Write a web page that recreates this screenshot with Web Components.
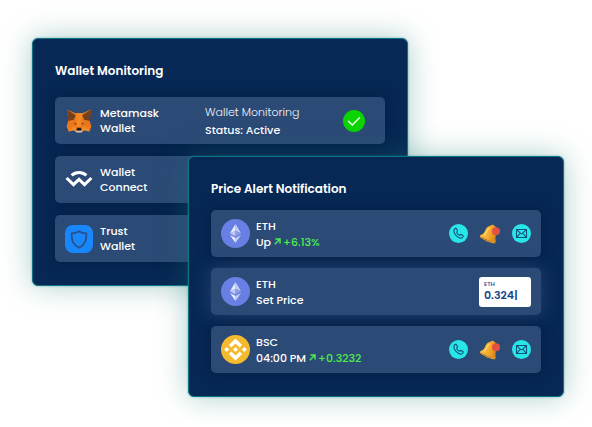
<!DOCTYPE html>
<html lang="en">
<head>
<meta charset="utf-8">
<meta name="viewport" content="width=device-width, initial-scale=1">
<title>Wallet Monitoring</title>
<style>
  body { margin: 0; background: #fff; color: #fff; font: 500 11px/15px Poppins, Inter, sans-serif; }
</style>
</head>
<body>
<card-stage>
  <glow-card heading="Wallet Monitoring">
    <wallet-row>
      <coin-icon slot="icon" name="metamask"></coin-icon>
      <span>Metamask<br>Wallet</span>
      <wallet-status slot="status"></wallet-status>
    </wallet-row>
    <wallet-row>
      <coin-icon slot="icon" name="connect"></coin-icon>
      <span>Wallet<br>Connect</span>
    </wallet-row>
    <wallet-row>
      <coin-icon slot="icon" name="trust"></coin-icon>
      <span>Trust<br>Wallet</span>
    </wallet-row>
  </glow-card>
  <glow-card class="front" heading="Price Alert Notification">
    <alert-row symbol="ETH" detail="Up" change="+6.13%">
      <coin-icon slot="icon" name="eth"></coin-icon>
      <alert-actions slot="end"></alert-actions>
    </alert-row>
    <alert-row class="lit" symbol="ETH" detail="Set Price">
      <coin-icon slot="icon" name="eth"></coin-icon>
      <price-field slot="end"></price-field>
    </alert-row>
    <alert-row symbol="BSC" detail="04:00 PM" change="+0.3232">
      <coin-icon slot="icon" name="bsc"></coin-icon>
      <alert-actions slot="end"></alert-actions>
    </alert-row>
  </glow-card>
</card-stage>

<script>
const define = (name, render) => customElements.define(name, class extends HTMLElement {
  connectedCallback() {
    if (this.shadowRoot) return;
    this.attachShadow({ mode: 'open' }).innerHTML = render(this);
  }
});

define('card-stage', () => `
  <style>
    :host { display: grid; grid-template-columns: 156px minmax(0, 1fr) 156px; align-items: start; padding: 38px 28px 28px 32px; }
    ::slotted(glow-card) { grid-row: 1; grid-column: 1 / 3; }
    ::slotted(.front) { grid-column: 2 / 4; margin-top: 118px; --head-gap: 12px; --row-gap: 11px; z-index: 1; }
  </style>
  <slot></slot>`);

define('glow-card', el => `
  <style>
    :host { display: block; box-sizing: border-box; padding: 23px 22px; border: 1px solid #0f7482; border-radius: 6px;
      background: #072854; box-shadow: 0 0 2px rgba(30,150,160,.7), 0 0 30px rgba(22,118,112,.36); }
    h2 { margin: 0 0 var(--head-gap, 17px); font-size: 12px; line-height: 18px; font-weight: 600; }
    .rows { display: grid; gap: var(--row-gap, 12px); }
  </style>
  <h2>${el.getAttribute('heading')}</h2>
  <div class="rows"><slot></slot></div>`);

const rowBox = `display: flex; align-items: center; box-sizing: border-box; min-height: 47px; border-radius: 5px;
  background: #2c4a76; box-shadow: 0 0 12px rgba(4,20,52,.55);`;

define('wallet-row', () => `
  <style>
    :host { ${rowBox} padding: 0 20px 0 10px; }
    .name { margin-left: 7px; width: 105px; flex: none; }
    .status { flex: 1; min-width: 0; }
  </style>
  <slot name="icon"></slot>
  <div class="name"><slot></slot></div>
  <div class="status"><slot name="status"></slot></div>`);

define('wallet-status', () => `
  <style>
    :host { display: flex; align-items: center; justify-content: space-between; line-height: 18px; }
    p { margin: 0; white-space: nowrap; }
    .what { font-weight: 300; color: #f2f5fa; }
    svg { display: block; flex: none; }
  </style>
  <div><p class="what">Wallet Monitoring</p><p>Status: Active</p></div>
  <svg width="22" height="22" viewBox="0 0 22 22" role="img" aria-label="Active">
    <circle cx="11" cy="11" r="11" fill="#0bd400"/>
    <path d="M5.5 11.2l3.8 3.9 7.2-7.4" fill="none" stroke="#e9ffe8" stroke-width="1.5" stroke-linecap="round" stroke-linejoin="round"/>
  </svg>`);

define('alert-row', el => {
  const change = el.getAttribute('change');
  return `
  <style>
    :host { ${rowBox} padding: 0 10px; line-height: 16px; }
    :host(.lit) { box-shadow: 0 0 18px rgba(72,92,150,.5); }
    .text { flex: 1; margin-left: 6px; white-space: nowrap; }
    p { margin: 0; display: flex; align-items: center; gap: 3px; }
    .up { display: inline-flex; align-items: center; gap: 2px; color: #4bef4b; }
  </style>
  <slot name="icon"></slot>
  <div class="text">
    <p>${el.getAttribute('symbol')}</p>
    <p>${el.getAttribute('detail')}${change ? `
      <span class="up"><svg width="7" height="7" viewBox="0 0 7 7" aria-hidden="true"><path d="M.8 6.200l4.900-4.900M1.400 1h4.600v4.600" fill="none" stroke="currentColor" stroke-width="1.500"/></svg>${change}</span>` : ''}</p>
  </div>
  <slot name="end"></slot>`;
});

define('alert-actions', () => `
  <style>
    :host { display: flex; align-items: center; gap: 10px; }
    button { display: block; padding: 0; border: 0; background: none; cursor: pointer; }
    svg { display: block; }
  </style>
  <button aria-label="Call"><svg width="19" height="19" viewBox="0 0 19 19">
    <circle cx="9.5" cy="9.5" r="9.5" fill="#28e6e8"/>
    <path d="M5.300 5.300c.9-1.100 1.900-1.200 2.300-.3l.8 1.600c.3.700-.9 1.100-.7 1.800.4 1.300 1.400 2.300 2.600 2.700.8.2 1.100-1 1.900-.7l1.500.8c.9.500.7 1.500-.4 2.400-1.300 1-4 .1-6-1.900-2.100-2.100-3.100-5.100-2-6.400z" fill="none" stroke="#12507c" stroke-width="1.100" stroke-linejoin="round"/>
  </svg></button>
  <button aria-label="Notify"><svg width="24" height="20" viewBox="0 0 24 20">
    <defs><linearGradient id="b" x1="0" y1="0" x2="1" y2=".3"><stop offset="0" stop-color="#ffc44c"/><stop offset=".6" stop-color="#f8ae2c"/><stop offset="1" stop-color="#d98a1f"/></linearGradient></defs>
    <path d="M7.400 15.300c-.2 2 2.600 3.600 4.200 2.200z" fill="#b86d18"/>
    <path d="M12.500 1.800c1-1.500 2.700-1.300 3.600-.4 2.500 1.300 3 4 2.400 6.700-.6 2.800-1.600 5.900-.7 10.200l-1.400.9L1.800 12.600l.5-1.300c3.300-1.200 4.300-3.200 5.200-5.500 1-2.300 2.600-3.700 5-4z" fill="url(#b)"/>
    <path d="M1.900 12.600c3.900 3.100 9.500 5.700 14.500 6.400" fill="none" stroke="#e39a28" stroke-width="1"/>
    <path d="M11.600 4.300c-2.600 1-2.600 4.300-5.100 6.900" fill="none" stroke="#ffd676" stroke-width="1.200" stroke-linecap="round"/>
    <circle cx="18" cy="7.200" r="4" fill="#e4503f"/>
  </svg></button>
  <button aria-label="Email"><svg width="19" height="19" viewBox="0 0 19 19">
    <circle cx="9.500" cy="9.500" r="9.500" fill="#28e6e8"/>
    <path d="M4.500 5.500h10v8h-10zM4.700 5.700l3.900 3.700q.9.800 1.800 0L14.300 5.700M4.700 13.300L8 9.500M14.300 13.300L11 9.500" fill="none" stroke="#12507c" stroke-width="1.100" stroke-linejoin="round"/>
  </svg></button>`);

define('price-field', () => `
  <style>
    :host { display: block; box-sizing: border-box; width: 52px; padding: 3px 5px 4px; border-radius: 3px; background: #fff; color: #174489; }
    label { display: block; font-size: 6px; line-height: 8px; }
    input { display: block; box-sizing: border-box; width: 100%; height: 15px; margin: 0; padding: 0; border: 0; background: none; color: inherit; font: inherit; font-weight: 600; line-height: 15px; outline: 0; }
  </style>
  <label for="price">ETH</label>
  <input id="price" type="text" inputmode="decimal" value="0.324|">`);

const eth = `<circle cx="14.500" cy="14.500" r="14.500" fill="#6880e3"/>
  <path d="M14.500 5L9 14.200l5.500-2.500z" fill="#e8ecfd"/><path d="M14.500 5v6.700l5.500 2.500z" fill="#c3cdf7"/>
  <path d="M9 14.200l5.500 3.300v-5.800z" fill="#c0caf6"/><path d="M20 14.200l-5.500 3.300v-5.800z" fill="#8c9de5"/>
  <path d="M9 15.900l5.500 3.200v5z" fill="#f0f3ff"/><path d="M20 15.900l-5.500 3.200v5z" fill="#c3cdf7"/>`;
const art = {
  eth: [29, 29, eth],
  bsc: [29, 29, `<circle cx="14.500" cy="14.500" r="14.500" fill="#f4b92c"/>
    <g fill="#fff"><path d="M14.500 3.600l6.600 6.500-2.400 2.400-4.200-4.100-4.200 4.100-2.400-2.400z"/><path d="M14.500 25.400l6.600-6.500-2.400-2.400-4.200 4.100-4.200-4.100-2.400 2.400z"/>
    <path d="M14.500 12l2.500 2.500-2.500 2.500-2.500-2.500zM5.700 12l2.500 2.500L5.700 17l-2.500-2.500zM23.300 12l2.500 2.500-2.500 2.500-2.500-2.500z"/></g>`],
  connect: [28, 28, `<g fill="none" stroke="#fff" stroke-width="3"><path d="M6.600 9.300c4.400-3.900 10.400-3.900 14.800 0"/>
    <path d="M1.600 12l6.900 6.600 5.500-5.300 5.500 5.300 6.900-6.600"/></g>`],
  trust: [28, 28, `<rect width="28" height="28" rx="8" fill="#1787fb"/>
    <path d="M14 6.300c2.300 1.700 4.500 2.200 7.400 2.200 0 7.200-1.300 11-7.400 14.200-6.100-3.200-7.400-7-7.400-14.200 2.900 0 5.100-.5 7.400-2.200z" fill="none" stroke="#2b4f88" stroke-width="1.800" stroke-linejoin="round"/>`],
  metamask: [28, 28, `<path d="M2 2.500l8.500 3.700h7L26 2.500l-1.500 10.800 1.900 6.300-2 5-5.200-1.400-3 2h-4.400l-3-2-5.200 1.400-2-5 1.900-6.300z" fill="#ef7c1c"/>
    <path d="M2 2.500l8.800 5.700-1.900 4.500-5.400 1.300-.8-1.700zM26 2.500l-8.800 5.700 1.900 4.500 5.400 1.300.8-1.700z" fill="#76401f"/>
    <path d="M10.500 6.200h7L16 14l.6 6h-5.200l.6-6z" fill="#f28a22"/>
    <path d="M3.500 14.200l5.600-1 2.900 6.300-3.500-.3-6.500.4zM24.500 14.200l-5.600-1-2.900 6.300 3.500-.3 6.500.4z" fill="#e9761b"/>
    <path d="M8.600 16.600l2.400-.8.700 2zM19.400 16.600l-2.400-.8-.7 2z" fill="#704021"/>
    <path d="M8.800 22.800l3 1h4.400l3-1-2.800 2.800h-4.800z" fill="#d5bfb2"/><path d="M12 20.800h4l.5 2.800h-5z" fill="#1c1c20"/>
    <path d="M3.600 24.600l4.900-5.400 2.700 2.200-2.400 1.800zM24.400 24.600l-4.900-5.400-2.700 2.200 2.400 1.800z" fill="#f38d2b"/>`]
};
define('coin-icon', el => {
  const [w, h, body] = art[el.getAttribute('name')];
  return `<style>:host { display: block; flex: none; } svg { display: block; }</style>
    <svg width="${w}" height="${h}" viewBox="0 0 ${w} ${h}" aria-hidden="true">${body}</svg>`;
});
</script>
</body>
</html>
